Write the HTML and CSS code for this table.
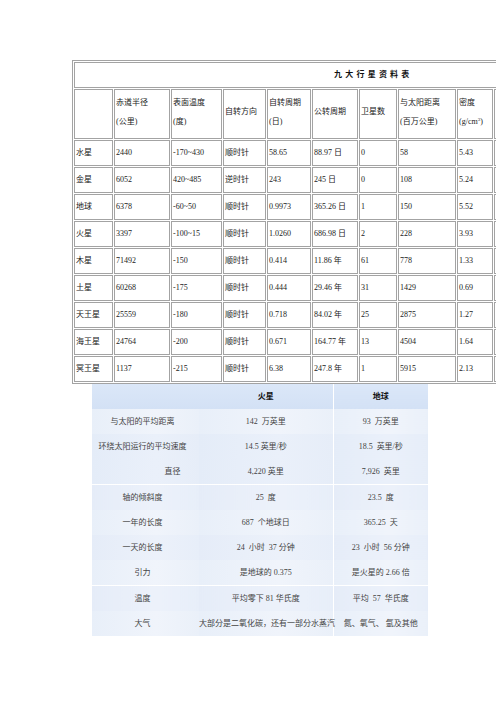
FILE: index.html
```
<!DOCTYPE html>
<html lang="zh-CN">
<head>
<meta charset="utf-8">
<title>九大行星资料表</title>
<link rel="stylesheet" href="styles.css">
</head>
<body>
<div class="page">
  <table class="planets">
    <colgroup>
      <col class="c1"><col class="c2"><col class="c3"><col class="c4"><col class="c5">
      <col class="c6"><col class="c7"><col class="c8"><col class="c9"><col class="c10">
    </colgroup>
    <tr class="title-row"><td colspan="10" class="title">九 大 行 星 资 料 表</td></tr>
    <tr class="head-row">
      <td></td>
      <td><div class="l">赤道半径</div><div class="l">(公里)</div></td>
      <td><div class="l">表面温度</div><div class="l">(度)</div></td>
      <td>自转方向</td>
      <td><div class="l">自转周期</div><div class="l">(日)</div></td>
      <td>公转周期</td>
      <td>卫星数</td>
      <td><div class="l">与太阳距离</div><div class="l">(百万公里)</div></td>
      <td><div class="l">密度</div><div class="l">(g/cm<sup>3</sup>)</div></td>
      <td><div class="l">质量</div><div class="l">(地球=1)</div></td>
    </tr>
    <tr><td>水星</td><td>2440</td><td>-170~430</td><td>顺时针</td><td>58.65</td><td>88.97 日</td><td>0</td><td>58</td><td>5.43</td><td>0.05</td></tr>
    <tr><td>金星</td><td>6052</td><td>420~485</td><td>逆时针</td><td>243</td><td>245 日</td><td>0</td><td>108</td><td>5.24</td><td>0.82</td></tr>
    <tr><td>地球</td><td>6378</td><td>-60~50</td><td>顺时针</td><td>0.9973</td><td>365.26 日</td><td>1</td><td>150</td><td>5.52</td><td>1.00</td></tr>
    <tr><td>火星</td><td>3397</td><td>-100~15</td><td>顺时针</td><td>1.0260</td><td>686.98 日</td><td>2</td><td>228</td><td>3.93</td><td>0.11</td></tr>
    <tr><td>木星</td><td>71492</td><td>-150</td><td>顺时针</td><td>0.414</td><td>11.86 年</td><td>61</td><td>778</td><td>1.33</td><td>317.94</td></tr>
    <tr><td>土星</td><td>60268</td><td>-175</td><td>顺时针</td><td>0.444</td><td>29.46 年</td><td>31</td><td>1429</td><td>0.69</td><td>95.18</td></tr>
    <tr><td>天王星</td><td>25559</td><td>-180</td><td>顺时针</td><td>0.718</td><td>84.02 年</td><td>25</td><td>2875</td><td>1.27</td><td>14.63</td></tr>
    <tr><td>海王星</td><td>24764</td><td>-200</td><td>顺时针</td><td>0.671</td><td>164.77 年</td><td>13</td><td>4504</td><td>1.64</td><td>17.22</td></tr>
    <tr><td>冥王星</td><td>1137</td><td>-215</td><td>顺时针</td><td>6.38</td><td>247.8 年</td><td>1</td><td>5915</td><td>2.13</td><td>0.0024</td></tr>
  </table>

  <table class="compare">
    <colgroup><col class="k1"><col class="k2"><col class="k3"></colgroup>
    <tr class="chead"><th></th><th>火星</th><th class="earth">地球</th></tr>
    <tr class="r-a"><td class="lab">与太阳的平均距离</td><td>142&nbsp; 万英里</td><td class="earth">93&nbsp; 万英里</td></tr>
    <tr class="r-b"><td class="lab">环绕太阳运行的平均速度</td><td>14.5 英里/秒</td><td class="earth">18.5&nbsp; 英里/秒</td></tr>
    <tr class="r-b"><td class="lab shift">直径</td><td>4,220 英里</td><td class="earth">7,926&nbsp; 英里</td></tr>
    <tr class="r-c sep"><td class="lab">轴的倾斜度</td><td>25&nbsp; 度</td><td class="earth">23.5&nbsp; 度</td></tr>
    <tr class="r-a"><td class="lab">一年的长度</td><td>687&nbsp; 个地球日</td><td class="earth">365.25&nbsp; 天</td></tr>
    <tr class="r-c"><td class="lab">一天的长度</td><td>24&nbsp; 小时&nbsp; 37 分钟</td><td class="earth">23&nbsp; 小时&nbsp; 56 分钟</td></tr>
    <tr class="r-a"><td class="lab">引力</td><td>是地球的 0.375</td><td class="earth">是火星的 2.66 倍</td></tr>
    <tr class="r-c sep"><td class="lab">温度</td><td>平均零下 81 华氏度</td><td class="earth">平均&nbsp; 57&nbsp; 华氏度</td></tr>
    <tr class="r-a"><td class="lab">大气</td><td>大部分是二氧化碳，还有一部分水蒸汽</td><td class="earth">氮、氧气、 氩及其他</td></tr>
  </table>
</div>
</body>
</html>
```

FILE: styles.css
```
html, body {
  margin: 0;
  padding: 0;
  background: #ffffff;
}

.page {
  width: 496px;
  height: 702px;
  overflow: hidden;
  padding: 60px 0 0 72px;
  box-sizing: border-box;
  font-family: "Liberation Serif", "Noto Sans CJK SC", serif;
  font-size: 8px;
  color: #333333;
}

.planets {
  table-layout: fixed;
  width: 600px;
  border-collapse: separate;
  border-spacing: 1px;
  border: 1px solid #a3a3a3;
}

.planets td {
  box-sizing: border-box;
  border: 1px solid #a3a3a3;
  padding: 0 1px;
  height: 26px;
  line-height: 10px;
  vertical-align: middle;
  white-space: nowrap;
  overflow: hidden;
  color: #222222;
}

.c1 { width: 39px; }
.c2 { width: 56px; }
.c3 { width: 51px; }
.c4 { width: 43px; }
.c5 { width: 44px; }
.c6 { width: 46px; }
.c7 { width: 38px; }
.c8 { width: 58px; }
.c9 { width: 36px; }
.c10 { width: 176px; }

.planets td.title {
  text-align: center;
  font-weight: bold;
  color: #111111;
  letter-spacing: 0.6px;
}

.planets .head-row td {
  height: 50px;
  padding-bottom: 4px;
}

.planets .l {
  line-height: 19px;
}

.planets sup {
  font-size: 5px;
  line-height: 0;
  vertical-align: 3px;
}

.compare {
  table-layout: fixed;
  width: 336px;
  margin-left: 20px;
  border-collapse: collapse;
  border-spacing: 0;
  background: #e9f0fa;
}

.k1 { width: 107px; }
.k2 { width: 134px; }
.k3 { width: 95px; }

.compare th,
.compare td {
  height: 25px;
  padding: 0;
  text-align: center;
  vertical-align: middle;
  white-space: nowrap;
  line-height: 10px;
  color: #444444;
}

.compare th {
  font-weight: bold;
  color: #111111;
  background: linear-gradient(#dbe7f8, #d3e1f5);
}

.compare .earth {
  border-left: 1px solid #ffffff;
}

.compare td.lab {
  padding-right: 6px;
}

.compare td.shift {
  padding-left: 54px;
  padding-right: 0;
}

.compare .r-a td {
  background: linear-gradient(90deg, #e8eff9, #f0f4fb 60%, #eaf0f9);
}

.compare .r-b td {
  background: linear-gradient(90deg, #e4ecf8, #eaf0fa 60%, #e6edf8);
}

.compare .r-c td {
  background: linear-gradient(90deg, #e5ecf8, #ecf1fa 60%, #e7eef9);
}

.compare .sep td {
  border-top: 1px solid #ffffff;
}
```
